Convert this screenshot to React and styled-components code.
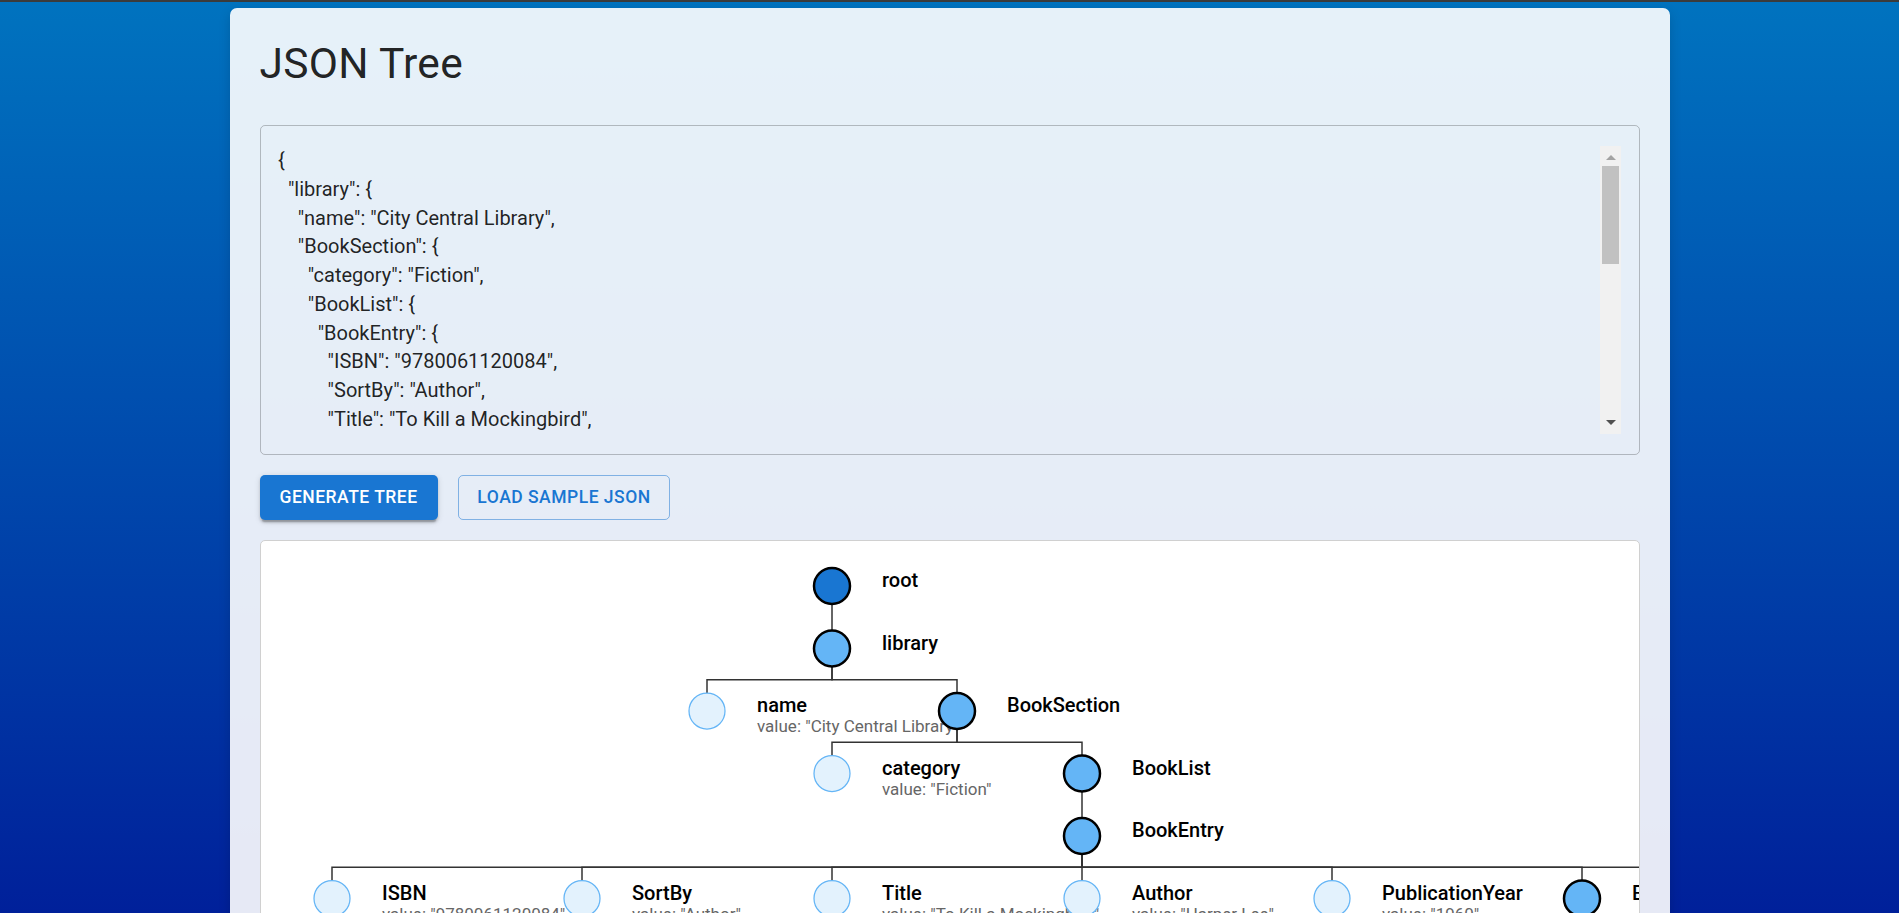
import React, { useState } from "react";
import styled, { createGlobalStyle, css } from "styled-components";

const GlobalStyle = createGlobalStyle`
  html {
    height: 100%;
    overflow: hidden;
    background:
      linear-gradient(#3b3b3b, #3b3b3b) top left / 100% 2px no-repeat fixed,
      linear-gradient(180deg, #0073bf 0%, #00209a 100%) fixed;
  }
  body {
    margin: 0;
    font-family: Roboto, "Liberation Sans", Arial, sans-serif;
    color: rgba(0, 0, 0, 0.87);
  }
  * { box-sizing: border-box; }
`;

const sample = {
  library: {
    name: "City Central Library",
    BookSection: {
      category: "Fiction",
      BookList: {
        BookEntry: {
          ISBN: "9780061120084",
          SortBy: "Author",
          Title: "To Kill a Mockingbird",
          Author: "Harper Lee",
          PublicationYear: "1960",
          BookDetails: {
            Genre: "Southern Gothic",
            Pages: "281",
            Language: "English",
            Format: "Paperback",
            Publisher: "J. B. Lippincott & Co.",
          },
          Availability: "Available",
        },
      },
    },
  },
};

/* ---------- layout ---------- */

const Page = styled.div`
  display: flex;
  justify-content: center;
  padding-top: 8px;
`;

const Card = styled.main`
  width: 1440px;
  flex: none;
  padding: 30px;
  background: rgba(255, 255, 255, 0.9);
  border-radius: 7px;
  box-shadow: 0 4px 12px rgba(0, 0, 0, 0.15);
`;

const Title = styled.h1`
  margin: 0 0 34.5px;
  font-size: 42.5px;
  line-height: 52.5px;
  font-weight: 400;
  letter-spacing: 0.3px;
  color: rgba(0, 0, 0, 0.87);
`;

const EditorBox = styled.div`
  display: flex;
  align-items: stretch;
  border: 1px solid rgba(0, 0, 0, 0.23);
  border-radius: 5px;
  padding: 20px 17.5px;
`;

const JsonArea = styled.textarea`
  display: block;
  flex: 1;
  min-width: 0;
  height: 287.5px;
  margin: 0;
  padding: 0;
  border: none;
  outline: none;
  resize: none;
  background: transparent;
  font-family: Roboto, "Liberation Sans", Arial, sans-serif;
  font-size: 20px;
  line-height: 28.75px;
  color: rgba(0, 0, 0, 0.87);
  overflow: hidden;
`;

/* drawn scrollbar beside the text */
const ScrollRail = styled.div`
  flex: none;
  width: 21px;
  display: flex;
  flex-direction: column;
  background: #f1f1f1;
`;

const RailButton = styled.div`
  flex: none;
  height: 20px;
  display: flex;
  align-items: center;
  justify-content: center;
  padding-top: ${(p) => (p.$dir === "up" ? "2px" : "0")};
  padding-bottom: ${(p) => (p.$dir === "down" ? "2px" : "0")};

  &::before {
    content: "";
    width: 0;
    height: 0;
    border-left: 5px solid transparent;
    border-right: 5px solid transparent;
    ${(p) =>
      p.$dir === "up"
        ? css`
            border-bottom: 5px solid #a3a3a3;
          `
        : css`
            border-top: 5px solid #505050;
          `}
  }
`;

const RailThumb = styled.div`
  flex: none;
  height: 98px;
  margin: 0 2px;
  background: #c1c1c1;
`;

const RailTrack = styled.div`
  flex: 1;
`;

const Actions = styled.div`
  display: flex;
  gap: 20px;
  margin-top: 20px;
`;

const Button = styled.button`
  display: inline-flex;
  align-items: center;
  justify-content: center;
  font-family: Roboto, "Liberation Sans", Arial, sans-serif;
  font-size: 17.5px;
  font-weight: 500;
  line-height: 1.75;
  letter-spacing: 0.5px;
  text-transform: uppercase;
  border-radius: 5px;
  cursor: pointer;
  ${(p) =>
    p.$variant === "contained"
      ? css`
          padding: 7.5px 20px;
          border: none;
          background: #1976d2;
          color: #fff;
          box-shadow: 0 3.75px 1.25px -2.5px rgba(0, 0, 0, 0.2),
            0 2.5px 2.5px 0 rgba(0, 0, 0, 0.14),
            0 1.25px 6.25px 0 rgba(0, 0, 0, 0.12);
        `
      : css`
          padding: 6.5px 18.75px;
          border: 1px solid rgba(25, 118, 210, 0.5);
          background: transparent;
          color: #1976d2;
        `}
`;

const TreeBox = styled.section`
  margin-top: 20px;
  height: 750px;
  background: #fff;
  border: 1px solid #d0d0d0;
  border-radius: 5px;
  overflow: hidden;
`;

const TreeSvg = styled.svg`
  display: block;
  width: 100%;
  height: 100%;
`;

const Link = styled.path`
  fill: none;
  stroke: #333;
  stroke-width: 1.5;
`;

const NodeCircle = styled.circle`
  ${(p) =>
    p.$kind === "root"
      ? css`
          fill: #1976d2;
          stroke: #000;
          stroke-width: 2.5;
        `
      : p.$kind === "branch"
      ? css`
          fill: #64b5f6;
          stroke: #000;
          stroke-width: 2.5;
        `
      : css`
          fill: #e3f2fd;
          stroke: #64b5f6;
          stroke-width: 1.25;
        `}
`;

const NodeLabel = styled.text`
  font-family: Roboto, "Liberation Sans", Arial, sans-serif;
  font-size: 20px;
  font-weight: 500;
  fill: #000;
`;

const NodeValue = styled.text`
  font-family: Roboto, "Liberation Sans", Arial, sans-serif;
  font-size: 17px;
  font-weight: 400;
  fill: #666;
`;

/* ---------- tree data ---------- */

const ROOT_X = 571;
const ROOT_Y = 45;
const ROW = 62.5;
const COL = 125;
const X_SLOT = {
  name: -1,
  BookSection: 1,
  BookList: 2,
  BookEntry: 2,
  ISBN: -4,
  SortBy: -2,
  Title: 0,
  Author: 2,
  PublicationYear: 4,
  BookDetails: 6,
  Availability: 8,
  Genre: 2,
  Pages: 4,
  Language: 6,
  Format: 8,
  Publisher: 10,
};

function toHierarchy(name, value) {
  const isObj = value !== null && typeof value === "object";
  return {
    name,
    value: isObj ? undefined : value,
    children: isObj
      ? Object.entries(value).map(([k, v]) => toHierarchy(k, v))
      : [],
  };
}

function layout(data) {
  const root = toHierarchy("root", data);
  const nodes = [];
  const links = [];
  const queue = [{ node: root, depth: 0, parent: null }];
  while (queue.length) {
    const { node, depth, parent } = queue.shift();
    const placed = {
      ...node,
      depth,
      x: ROOT_X + (X_SLOT[node.name] ?? 0) * COL,
      y: ROOT_Y + depth * ROW,
    };
    placed.kind =
      depth === 0 ? "root" : node.children.length ? "branch" : "leaf";
    nodes.push(placed);
    if (parent) links.push({ s: parent, t: placed });
    node.children.forEach((c) =>
      queue.push({ node: c, depth: depth + 1, parent: placed })
    );
  }
  return { nodes, links };
}

function JsonTree({ data }) {
  const { nodes, links } = layout(data);
  return (
    <TreeSvg>
      {links.map(({ s, t }, i) => {
        const my = (s.y + t.y) / 2;
        return <Link key={i} d={`M${s.x},${s.y}V${my}H${t.x}V${t.y}`} />;
      })}
      {nodes.map((n, i) => (
        <g key={i}>
          <NodeCircle cx={n.x} cy={n.y} r={18} $kind={n.kind} />
          <NodeLabel x={n.x + 50} y={n.y + 1}>
            {n.name}
          </NodeLabel>
          {n.kind === "leaf" && (
            <NodeValue x={n.x + 50} y={n.y + 21}>
              {`value: ${JSON.stringify(n.value)}`}
            </NodeValue>
          )}
        </g>
      ))}
    </TreeSvg>
  );
}

export default function App() {
  const [text, setText] = useState(JSON.stringify(sample, null, 2));
  const [tree, setTree] = useState(sample);

  const generate = () => {
    try {
      setTree(JSON.parse(text));
    } catch (e) {
      /* ignore invalid JSON */
    }
  };

  return (
    <>
      <GlobalStyle />
      <Page>
        <Card>
          <Title>JSON Tree</Title>
          <EditorBox>
            <JsonArea
              value={text}
              spellCheck={false}
              onChange={(e) => setText(e.target.value)}
            />
            <ScrollRail aria-hidden="true">
              <RailButton $dir="up" />
              <RailThumb />
              <RailTrack />
              <RailButton $dir="down" />
            </ScrollRail>
          </EditorBox>
          <Actions>
            <Button $variant="contained" onClick={generate}>
              Generate Tree
            </Button>
            <Button
              $variant="outlined"
              onClick={() => setText(JSON.stringify(sample, null, 2))}
            >
              Load Sample JSON
            </Button>
          </Actions>
          <TreeBox>
            <JsonTree data={tree} />
          </TreeBox>
        </Card>
      </Page>
    </>
  );
}
